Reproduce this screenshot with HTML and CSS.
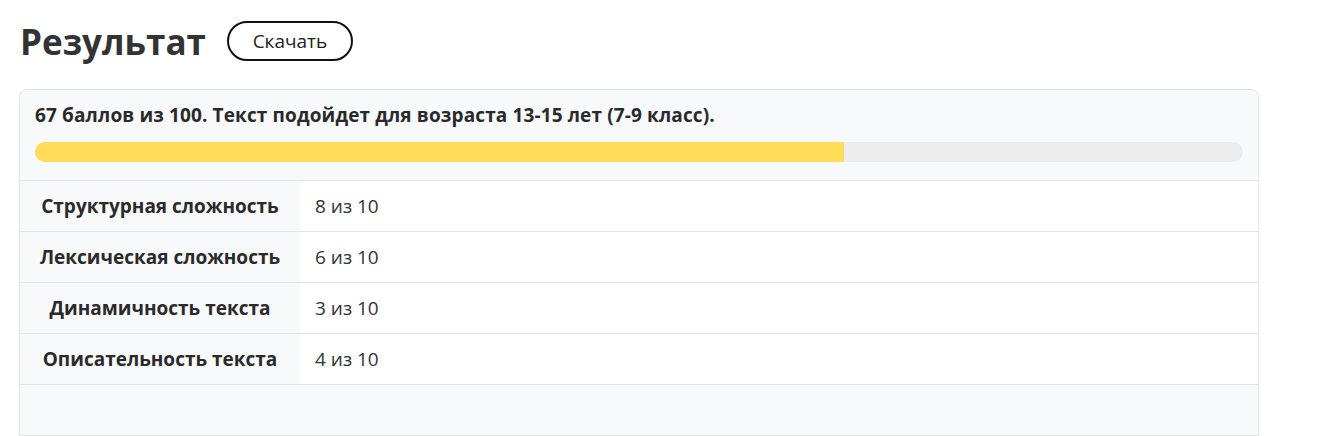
FILE: index.html
```html
<!DOCTYPE html>
<html lang="ru">
<head>
<meta charset="utf-8">
<link rel="stylesheet" href="styles.css">
</head>
<body>
<div class="page">
  <div class="head">
    <h1 class="title">Результат</h1>
    <button class="btn">Скачать</button>
  </div>
  <div class="card">
    <div class="card-top">
      <div class="summary">67 баллов из 100. Текст подойдет для возраста 13-15 лет (7-9 класс).</div>
      <div class="bar"><div class="bar-fill" style="width:67%"></div></div>
    </div>
    <div class="rows">
      <div class="row"><div class="label">Структурная сложность</div><div class="value">8 из 10</div></div>
      <div class="row"><div class="label">Лексическая сложность</div><div class="value">6 из 10</div></div>
      <div class="row"><div class="label">Динамичность текста</div><div class="value">3 из 10</div></div>
      <div class="row"><div class="label">Описательность текста</div><div class="value">4 из 10</div></div>
    </div>
    <div class="card-foot"></div>
  </div>
</div>
</body>
</html>
```
FILE: styles.css
```css
html, body {
  margin: 0;
  padding: 0;
  background: #fff;
}
body {
  font-family: "Open Sans", "Noto Sans", sans-serif;
  color: #333;
}
.page {
  padding: 21px 0 0 19px;
  width: 1240px;
}
.head {
  display: flex;
  align-items: center;
  gap: 21px;
  height: 44px;
  margin-bottom: 24px;
}
.title {
  margin: -2px 0 0 1px;
  font-size: 35px;
  font-weight: 700;
  color: #333;
  line-height: 44px;
}
.btn {
  font-family: inherit;
  font-size: 19px;
  color: #222;
  background: #fff;
  border: 2px solid #111;
  border-radius: 20px;
  height: 40px;
  width: 126px;
  padding: 0;
  margin-top: -4px;
}
.card {
  border: 1px solid #e3e4e8;
  border-radius: 8px 8px 0 0;
  background: #f8f9fb;
  overflow: hidden;
}
.card-top {
  padding: 12px 15px 18px 15px;
  border-bottom: 1px solid #e3e4e8;
}
.summary {
  font-size: 19px;
  font-weight: 700;
  letter-spacing: 0.13px;
  color: #2a2a2a;
  line-height: 26px;
  margin-bottom: 14px;
}
.bar {
  height: 20px;
  background: #ececec;
  border-radius: 10px;
  overflow: hidden;
}
.bar-fill {
  height: 100%;
  background: #ffdc58;
}
.row {
  display: flex;
  height: 50px;
  border-bottom: 1px solid #e3e4e8;
}
.label {
  width: 280px;
  background: #f8f9fb;
  display: flex;
  align-items: center;
  justify-content: center;
  font-weight: 700;
  font-size: 19px;
  color: #2a2a2a;
}
.value {
  flex: 1;
  background: #fff;
  display: flex;
  align-items: center;
  padding-left: 15px;
  font-size: 19px;
  color: #333;
}
.card-foot {
  height: 50px;
}
```
